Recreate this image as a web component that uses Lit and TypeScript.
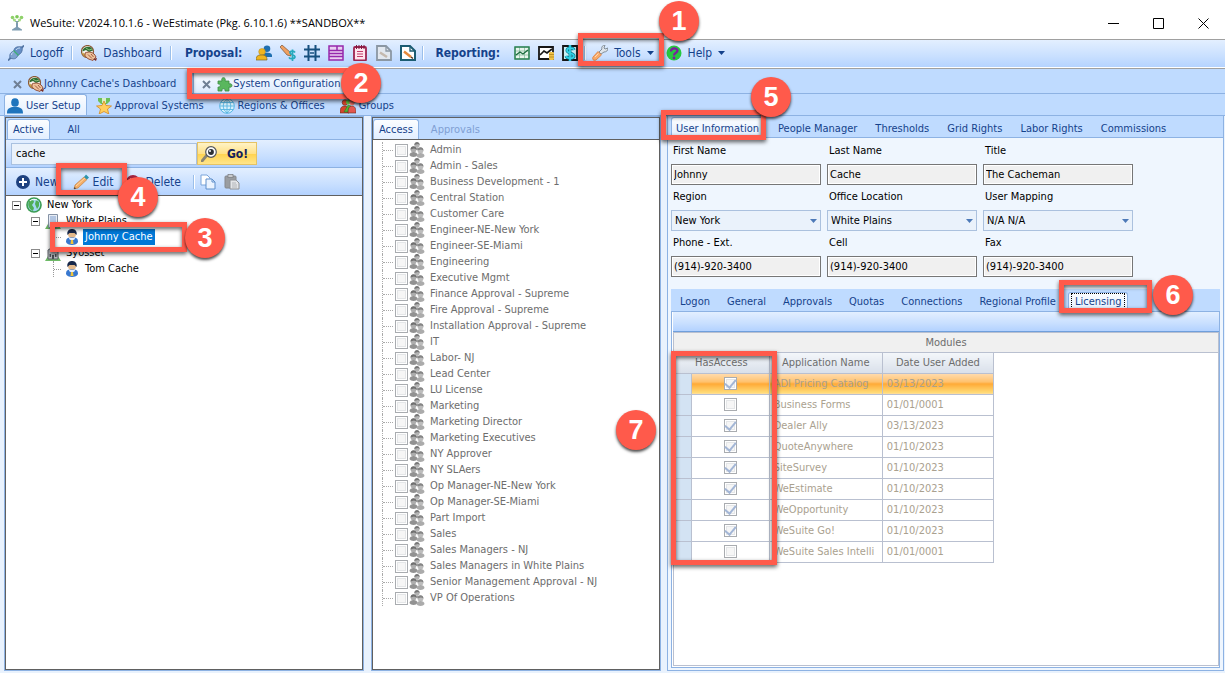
import { LitElement, html, css, svg, nothing, TemplateResult } from "lit";
import { customElement, property } from "lit/decorators.js";
import { classMap } from "lit/directives/class-map.js";
import { styleMap } from "lit/directives/style-map.js";

const glyphs: Record<string, TemplateResult> = {
  tree: svg`<path d="M7 6h2v6l4 2.500v1H3v-1L7 12z" fill="#7d9bb0"/><path d="M3.500 3.500L8 8l4.500-4.500" stroke="#8fae9a" fill="none"/><circle cx="3.500" cy="2.500" r="1.800" fill="#8fd16a"/><circle cx="8" cy="1.800" r="1.800" fill="#7cc957"/><circle cx="12.500" cy="2.500" r="1.800" fill="#8fd16a"/><circle cx="5.500" cy="5" r="1.500" fill="#a5db83"/><circle cx="10.500" cy="5" r="1.500" fill="#a5db83"/>`,
  plug: svg`<path d="M0 15.500l4-4M12 4.500l4-4" stroke="#5577a5" stroke-width="1.800"/><path d="M2 13c-1-4 1-6 4-7l4 4c-1 3-3 5-8 3z" fill="#7fa3d1" stroke="#48699a" stroke-width=".8"/><path d="M6 6c0-3 2-5 8-4 1 4-1 7-4 8z" fill="#6790c6" stroke="#48699a" stroke-width=".8"/><path d="M5.500 5.500l5 5" stroke="#3fae74" stroke-width="1.300"/><path d="M3.500 10c0-1.500 1-2.500 2-3M8 5c1-1.500 2.500-2 4-2" stroke="#c9dcf3" fill="none"/>`,
  dash: svg`<circle cx="6.500" cy="6.500" r="6" fill="#f6f3ec" stroke="#8b5a38" stroke-width="1.200"/><path d="M1.500 6.500c0-5 9-7 10.500-1L8 7 5 5z" fill="#2f6e35"/><path d="M5 3l3 2 3-1" stroke="#8cc27a" fill="none"/><path d="M1.500 8l3 3.500" stroke="#c8a040" stroke-width="1.500"/><path d="M4 8c4-2 9-1 11 4l-3 3.500c-2-1-6-1-8-5z" fill="#efc49d" stroke="#8a3f28" stroke-width=".9"/><path d="M7 9.500l4 4M10 9l2.500 3" stroke="#8a3f28" stroke-width=".8"/><path d="M12 14l3 2 1-3z" fill="#7a2d25"/>`,
  people: svg`<circle cx="11" cy="3.800" r="3.300" fill="#1f6fb0"/><path d="M6 12V9c1-2 9-2 10 1v2z" fill="#1f6fb0"/><circle cx="6" cy="6.800" r="3.300" fill="#f0b51d" stroke="#b58a22" stroke-width=".5"/><path d="M0 15c0-5 3-5 6-5s5 1 5 5z" fill="#f0b51d" stroke="#7c6420" stroke-width=".7"/>`,
  pendollar: svg`<path d="M0 2l2-2 8 7 1 4-4-1z" fill="#f0a060" stroke="#775339" stroke-width=".7"/><path d="M15 7.500c-1-2-5-2-5 .3s5 1.700 5 4-5 2.500-6 .5M12.500 4.500V16" stroke="#27a9bd" stroke-width="1.700" fill="none"/>`,
  grid: svg`<path d="M0 4.500h16M0 11.500h16M4.500 0v16M11.500 0v16" stroke="#17507f" stroke-width="2"/><path d="M6 8h4" stroke="#17507f" stroke-width="1.500"/>`,
  form: svg`<path d="M1 1h14v14H1zM1 5.500h14M1 8.500h14M1 11.500h14M9 1v4.500" fill="#ead1f2" stroke="#9629ac" stroke-width="1.500"/>`,
  note: svg`<rect x="2" y="2" width="12" height="13.500" rx="1" fill="#ffe4ee" stroke="#9d2350" stroke-width="1.800"/><path d="M4.500 0v4M7 0v4M9.500 0v4M12 0v4" stroke="#7c1a3f"/><path d="M5 6.500h6M5 9h6M5 11.500h6" stroke="#c23c6c" stroke-width="1.200"/>`,
  pageGray: svg`<path d="M1 1h9l5 5v9H1z" fill="#e2e8ef" stroke="#8b97a3" stroke-width="1.800"/><path d="M10 1v5h5" fill="none" stroke="#8b97a3" stroke-width="1.300"/><path d="M4 7.500l7 4.500" stroke="#c4b9ae" stroke-width="2.500"/>`,
  pageEdit: svg`<path d="M1 1h9l5 5v9H1z" fill="#fff" stroke="#1b5c72" stroke-width="2"/><path d="M10 1v5h5" fill="none" stroke="#1b5c72" stroke-width="1.300"/><path d="M4 6.500l7 5.500" stroke="#e58a3c" stroke-width="2.500"/><path d="M11 12l2 1.500" stroke="#4a3826" stroke-width="1.500"/>`,
  chartGreen: svg`<path d="M1 2h14v12H1zM1 6h14M1 10h14M5.500 2v12M10.500 2v12" fill="#e8f5ec" stroke="#7db596" stroke-width=".7"/><path d="M1 2h14v12H1z" fill="none" stroke="#2e8254" stroke-width="1.500"/><path d="M2 10l4-3 3 2 5-4" fill="none" stroke="#1a6b3d" stroke-width="1.400"/>`,
  chartBlack: svg`<path d="M1 2h14v12H1z" fill="#fff" stroke="#161616" stroke-width="1.800"/><path d="M2 10l4-4 3 2 5-4" fill="none" stroke="#161616" stroke-width="1.700"/><rect x="11" y="7" width="5" height="8" rx="1" fill="#f0c248"/><path d="M11 9.500h5M11 12h5" stroke="#a77b16" stroke-width=".7"/>`,
  dollar: svg`<path d="M1 1h14v14H1z" fill="#c9eff6" stroke="#151515" stroke-width="1.800"/><path d="M12 5c-1-3-7-2.500-7 .5S12 8 12 11s-7 3-8 0M8 0v16" fill="none" stroke="#0c7c92" stroke-width="3"/><path d="M12 5c-1-3-7-2.500-7 .5S12 8 12 11s-7 3-8 0M8 0v16" fill="none" stroke="#30d3e8" stroke-width="1.700"/>`,
  wrench: svg`<path d="M7 7l3-3c-1-2 1-4 3-4l-1 3 1 1 3-1c0 3-2 4-4 4L9 9z" fill="#dfe4ea" stroke="#6c7883" stroke-width=".8"/><path d="M1 12l5-5.500 3.500 3.500L4 15c-3 1-4-1-3-3z" fill="#f8ab6c" stroke="#dd7c38" stroke-width=".8"/><path d="M3 12l3.500-3.500" stroke="#ffd9b5"/>`,
  help: svg`<circle cx="8" cy="8" r="7.500" fill="#27c940"/><path d="M5 6.500c0-4 6.500-4 6.500-.8C11.500 8 8 7.500 8 10.500" fill="none" stroke="#7a1fa0" stroke-width="2.300"/><circle cx="8" cy="13" r="1.400" fill="#7a1fa0"/>`,
  puzzle: svg`<path d="M1 5h4c-1.800-4.500 4.800-4.500 3 0h4v3c4-1.500 4 4.500 0 3v4H8c1-3-4-3-3 0H1v-4c3 1 3-4 0-3z" fill="#5ab75e" stroke="#3b8d40" stroke-width=".8"/>`,
  user: svg`<ellipse cx="8" cy="4.500" rx="3.800" ry="4.300" fill="#1f74bd"/><path d="M0 15.500c0-5 2-5.500 5.500-6.500h5c3.500 1 5.500 1.500 5.500 6.500z" fill="#1f74bd"/>`,
  star: svg`<path d="M2 0h12v3l-3 3H5L2 3z" fill="#6cbf58"/><path d="M6 0h4v5H6z" fill="#d8f0c8"/><path d="M8 3l2 4.500 5.500.5-4 3 1.300 5L8 13.500 3.200 16l1.300-5-4-3L6 7.500z" fill="#ffcf5e" stroke="#d58a20" stroke-width=".8"/>`,
  globeLine: svg`<circle cx="8" cy="8" r="7.300" fill="#d9f1fc" stroke="#55b4e2"/><path d="M8 1v14M1 8h14M2 4.500h12M2 11.500h12M8 1c-5 4-5 10 0 14M8 1c5 4 5 10 0 14" fill="none" stroke="#55b4e2" stroke-width=".9"/>`,
  groups: svg`<circle cx="5" cy="4.500" r="2.800" fill="#e0452c" stroke="#5c2b1c" stroke-width=".6"/><path d="M0 15c0-6 2-7 5-7s4 2 4 7z" fill="#d6452c" stroke="#5c2b1c" stroke-width=".6"/><circle cx="8.500" cy="4" r="2.500" fill="#63c443"/><path d="M4 14l4-7 3 1-1 6z" fill="#4fb536" stroke="#276b20" stroke-width=".5"/><circle cx="12" cy="4.500" r="2.700" fill="#ef7468"/><path d="M8 15c0-6 2-7 4-7s4 1 4 7z" fill="#e4574e" stroke="#5c2b1c" stroke-width=".6"/>`,
  search: svg`<path d="M1 15l5-6" stroke="#8b8572" stroke-width="2.800" stroke-linecap="round"/><circle cx="10" cy="6" r="5.300" fill="#fff" stroke="#55585c" stroke-width="1.200"/><circle cx="10" cy="6" r="2.900" fill="#2b3035"/><circle cx="9" cy="5" r="1" fill="#fff"/>`,
  plus: svg`<circle cx="8" cy="8" r="7" fill="#1f4280"/><path d="M8 4v8M4 8h8" stroke="#fff" stroke-width="2"/>`,
  minus: svg`<circle cx="8" cy="8" r="7" fill="#a32440"/><path d="M5 5l6 6M11 5l-6 6" stroke="#fff" stroke-width="2"/>`,
  pencil: svg`<path d="M1 15l1-4L11 3l3 2.500L5 14z" fill="#f4ae68" stroke="#c08248" stroke-width=".7"/><path d="M3 12l9-8" stroke="#ffd7a3"/><path d="M11 3l2-2.500 3 3L14 5.500z" fill="#2d94ac"/><path d="M1 15l.6-2 1.400 1.400z" fill="#333"/>`,
  copy: svg`<path d="M1 1h6l3 3v7H1z" fill="#fff" stroke="#7ba5da"/><path d="M6 5h6l3 3v7H6z" fill="#eaf3ff" stroke="#5f8fcb"/><path d="M12 5v3h3" fill="none" stroke="#5f8fcb"/>`,
  paste: svg`<rect x="1" y="2" width="11" height="12" rx="1" fill="#9a9da1" stroke="#85888c"/><rect x="4" y="0.500" width="5" height="3" fill="#c9cbce" stroke="#77797c" stroke-width=".7"/><path d="M6 6h6l3 3v6H6z" fill="#e3e5e8" stroke="#8e9195"/><path d="M8 9h4M8 11h5M8 13h5" stroke="#a6a9ad" stroke-width=".8"/>`,
  globe: svg`<circle cx="8" cy="8" r="7.800" fill="#3b9c52"/><circle cx="8" cy="8" r="6.200" fill="#a5d8f2"/><path d="M3 4c3-2 5-1 5 1l-2 3 2 3-1 3C3 12 1 8 3 4zM10 3l3 2v4l-2 3-2-5z" fill="#4fae55"/><path d="M4 4c2-2 5-2 7-1" stroke="#fff" fill="none"/>`,
  building: svg`<path d="M0 16l3-5h10l3 5z" fill="#6dba66"/><path d="M3.500 1.500h9v13h-9z" fill="#e8edf5" stroke="#8592a5"/><path d="M5 4h6M5 6h6M5 8h6M5 10h6M5 12h6" stroke="#7f9fcf"/>`,
  office: svg`<path d="M0 16l3-5h10l3 5z" fill="#6dba66"/><path d="M3 5l5-3 5 3v9H3z" fill="#b6b9be" stroke="#5e6369"/><path d="M7 10h2v4H7zM4.500 9H6v3H4.500zM10 9h1.500v3H10z" fill="#4a4f55"/>`,
  agent: svg`<circle cx="8" cy="5" r="4" fill="#e3b98b"/><path d="M3.500 6c-2-8 11-8 9 0l-2-2h-5z" fill="#17284a"/><path d="M2 13c0-4 2-4.500 6-4.500s6 .5 6 4.500c-1 4-11 4-12 0z" fill="#3878cf"/><path d="M5 9c0 3 6 3 6 0z" fill="#e7f0ff"/><path d="M7 11h2l.5 4h-3z" fill="#f0c33c"/>`,
  team: svg`<circle cx="8" cy="3" r="2.600" fill="#b4b4b4"/><path d="M5.300 3c0-4 5.400-4 5.400 0L9 2z" fill="#777"/><path d="M4.500 8c0-3.500 7-3.500 7 0z" fill="#9c9c9c"/><circle cx="4.500" cy="7.500" r="2.900" fill="#adadad"/><path d="M1.500 7.500c0-4.500 6-4.500 6 0L5 6.500z" fill="#6f6f6f"/><path d="M.5 13c0-4 8-4 8 0-1 2.500-7 2.500-8 0z" fill="#929292"/><circle cx="11.500" cy="8.500" r="2.900" fill="#bdbdbd"/><path d="M8.500 8.500c0-4.500 6-4.500 6 0l-2.500-1z" fill="#858585"/><path d="M7.500 14c0-4 8-4 8 0-1 2.500-7 2.500-8 0z" fill="#ababab"/>`,
};

const icon = (name: string) =>
  html`<svg class="icon" viewBox="0 0 16 16" width="16" height="16" aria-hidden="true">${glyphs[name]}</svg>`;
const caret = html`<svg class="caret" viewBox="0 0 7 4" width="7" height="4" aria-hidden="true"><path d="M0 0h7L3.500 4z" fill="currentColor"/></svg>`;

const shared = css`
  * { box-sizing: border-box; }
  button, input, select { font: inherit; color: inherit; margin: 0; border-radius: 0; }
  button { background: none; border: 0; padding: 0; display: flex; align-items: center; white-space: nowrap; }
  .icon { display: block; flex: none; }
  .caret { display: block; flex: none; }
  .bar { display: flex; align-items: center; background: linear-gradient(#e3efff, #c8dfff 60%, #b3d2ff); color: #15428b; font-size: 12px; }
  .sep { width: 2px; height: 14px; background: #fff; border-left: 1px solid #9bbfea; flex: none; }
  .strip { display: flex; align-items: flex-end; background: #bfdbff; color: #15428b; }
  .tab { height: 20px; padding: 0 8px; border: 1px solid transparent; border-bottom: 0; }
  .tab.on { background: linear-gradient(#fbfdff, #e3efff); border-color: #8db2e3; border-radius: 3px 3px 0 0; }
  .check { appearance: none; width: 13px; height: 13px; border: 1px solid #a9acb0; background: #f6f6f6; box-shadow: inset 0 0 0 1px #fff, inset 0 0 0 2px #e4e6e8; display: grid; place-items: center; flex: none; }
  .check:checked::after { content: ""; width: 5px; height: 9px; border: solid #a3b6d6; border-width: 0 2px 2px 0; transform: translateY(-1px) rotate(40deg); }
`;

@customElement("user-tree")
class UserTree extends LitElement {
  static styles = [shared, css`
    :host { display: flex; flex-direction: column; border: 1px solid #606060; outline: 1px solid #8db2e3; background: #fff; min-width: 0; }
    .strip { height: 22px; border-bottom: 1px solid #8db2e3; }
    .tab { padding: 0 5px; margin-left: 1px; }
    .tab + .tab { margin-left: 12px; }
    .find { height: 28px; padding: 0 5px; border-bottom: 1px solid #8db2e3; }
    .term { width: 186px; height: 22px; border: 1px solid #a9c1e0; background: #eaf2fb; color: #000; padding: 0 4px; font-size: 11px; }
    .go { height: 23px; width: 60px; border: 1px solid #e5c365; background: linear-gradient(#fff3c6, #ffe188 50%, #ffd34e 52%, #ffe58c); color: #15225b; font-weight: bold; gap: 10px; padding: 0 3px; }
    .tools { height: 28px; padding: 0 9px; border-bottom: 1px solid #606060; }
    .tools button { gap: 4px; height: 22px; }
    .new { margin-right: 14px; }
    .edit, .del { margin-right: 12px; }
    .tools .copy { margin: 0 8px 0 5px; }
    ul { list-style: none; margin: 0; padding: 0; }
    .tree { padding: 1px 6px; flex: 1; }
    .node { display: flex; align-items: center; height: 16px; gap: 3px; }
    .name { padding: 0 2px; line-height: 16px; }
    .name.on { background: #0078d7; color: #fff; }
    .box { width: 9px; height: 9px; border: 1px solid #8a8a8a; display: grid; place-items: center; margin-right: 2px; background: #fff; }
    .box::after { content: ""; width: 5px; height: 1px; background: #000; }
    .kids { margin-left: 19px; }
    .kids .kids { margin-left: 22px; border-left: 1px dotted #999; }
    .leaf::before { content: ""; width: 7px; border-top: 1px dotted #999; }
  `];
  render() {
    return html`
      <div class="strip" role="tablist"><button class="tab on" role="tab">Active</button><button class="tab" role="tab">All</button></div>
      <div class="bar find"><input class="term" aria-label="Search users" .value=${"cache"}><button class="go">${icon("search")}Go!</button></div>
      <div class="bar tools">
        <button class="new">${icon("plus")}New</button><button class="edit">${icon("pencil")}Edit</button>
        <button class="del">${icon("minus")}Delete</button><span class="sep"></span>
        <button class="copy" aria-label="Copy">${icon("copy")}</button><button aria-label="Paste">${icon("paste")}</button>
      </div>
      <ul class="tree">
        <li><div class="node"><span class="box"></span>${icon("globe")}<span class="name">New York</span></div>
          <ul class="kids">
            <li><div class="node"><span class="box"></span>${icon("building")}<span class="name">White Plains</span></div>
              <ul class="kids"><li><div class="node leaf">${icon("agent")}<span class="name on">Johnny Cache</span></div></li></ul></li>
            <li><div class="node"><span class="box"></span>${icon("office")}<span class="name">Syosset</span></div>
              <ul class="kids"><li><div class="node leaf">${icon("agent")}<span class="name">Tom Cache</span></div></li></ul></li>
          </ul></li>
      </ul>`;
  }
}

const roles = ["Admin", "Admin - Sales", "Business Development - 1", "Central Station", "Customer Care", "Engineer-NE-New York", "Engineer-SE-Miami", "Engineering", "Executive Mgmt", "Finance Approval - Supreme", "Fire Approval - Supreme", "Installation Approval - Supreme", "IT", "Labor- NJ", "Lead Center", "LU License", "Marketing", "Marketing Director", "Marketing Executives", "NY Approver", "NY SLAers", "Op Manager-NE-New York", "Op Manager-SE-Miami", "Part Import", "Sales", "Sales Managers - NJ", "Sales Managers in White Plains", "Senior Management Approval - NJ", "VP Of Operations"];

@customElement("access-list")
class AccessList extends LitElement {
  static styles = [shared, css`
    :host { display: flex; flex-direction: column; border: 1px solid #606060; outline: 1px solid #8db2e3; background: #fff; min-width: 0; }
    .strip { height: 22px; border-bottom: 1px solid #606060; }
    .tab { padding: 0 5px; }
    .tab.off { margin-left: 6px; color: #7f9fd3; }
    .roles { list-style: none; margin: 0; padding: 2px 9px; color: #6d6d6d; }
    .role { display: flex; align-items: center; height: 16px; border-left: 1px dotted #aaa; }
    .role::before { content: ""; width: 10px; border-top: 1px dotted #aaa; margin-right: 2px; }
    .role label { display: flex; align-items: center; height: 16px; }
    .role .icon { margin: 0 5px 0 1px; }
  `];
  render() {
    return html`
      <div class="strip" role="tablist"><button class="tab on" role="tab">Access</button><button class="tab off" role="tab">Approvals</button></div>
      <ul class="roles">${roles.map(r => html`<li class="role"><label><input class="check" type="checkbox" disabled>${icon("team")}${r}</label></li>`)}</ul>`;
  }
}

const modules: [boolean, string, string][] = [
  [true, "ADI Pricing Catalog", "03/13/2023"], [false, "Business Forms", "01/01/0001"], [true, "Dealer Ally", "03/13/2023"],
  [true, "QuoteAnywhere", "01/10/2023"], [true, "SiteSurvey", "01/10/2023"], [true, "WeEstimate", "01/10/2023"],
  [true, "WeOpportunity", "01/10/2023"], [true, "WeSuite Go!", "01/10/2023"], [false, "WeSuite Sales Intelli", "01/01/0001"],
];
const fields: [string, string, boolean][] = [
  ["First Name", "Johnny", false], ["Last Name", "Cache", false], ["Title", "The Cacheman", false],
  ["Region", "New York", true], ["Office Location", "White Plains", true], ["User Mapping", "N/A N/A", true],
  ["Phone - Ext.", "(914)-920-3400", false], ["Cell", "(914)-920-3400", false], ["Fax", "(914)-920-3400", false],
];

@customElement("user-details")
class UserDetails extends LitElement {
  static styles = [shared, css`
    :host { display: flex; flex-direction: column; border: 1px solid #8db2e3; border-top: 0; background: #eff6fe; min-width: 0; padding: 0 3px 2px; }
    .strip { height: 22px; }
    .top { margin: 0 -3px; padding-left: 3px; border-bottom: 1px solid #8db2e3; }
    .top .tab { padding-top: 2px; }
    .top .tab.on { padding: 2px 4px 0; margin-right: 5px; }
    .fields { display: grid; grid-template-columns: repeat(3, 150px); column-gap: 6px; padding: 1px 0 12px; }
    .field { display: flex; flex-direction: column; color: #000; }
    .field label { height: 25px; line-height: 24px; padding-left: 2px; }
    .holder { position: relative; height: 21px; display: flex; }
    .holder input { flex: 1; min-width: 0; background: #f0f0f0; border: 1px solid #767676; box-shadow: inset 0 0 0 1px #fff; padding: 0 2px; }
    .holder select { flex: 1; min-width: 0; appearance: none; background: #eaf2fb; border: 1px solid #abc1de; padding: 0 3px; outline: 0; }
    .holder .caret { position: absolute; right: 4px; top: 9px; color: #4d7ab8; pointer-events: none; }
    .sub .tab { height: 19px; padding: 0 7px 0 8px; }
    .sub .tab.on { margin-left: 4px; padding: 0 3px; }
    .focus { outline: 1px dotted #000; padding: 0 3px; line-height: 16px; }
    .body { flex: 1; display: flex; flex-direction: column; border: 1px solid #8db2e3; background: #fff; padding: 0 0 1px 1px; }
    .blank { height: 20px; border-bottom: 1px solid #6f9fdc; }
    .frame { flex: 1; border: 1px solid #b9c0d0; }
    .title { height: 20px; line-height: 19px; text-align: center; background: #f0f0f0; border-bottom: 1px solid #b9c0d0; color: #6d6d6d; }
    table { border-collapse: collapse; table-layout: fixed; width: 320px; }
    th { height: 20px; padding: 0; font-weight: normal; color: #6d6d6d; background: linear-gradient(#f3f6fa, #d9e0ea); border: 1px solid #b9c0d0; border-top: 0; }
    td { height: 21px; padding: 0 4px; color: #aaa18f; border: 1px solid #b9c0d0; overflow: hidden; white-space: nowrap; }
    th:first-child, td:first-child { border-left: 0; }
    td.lead { background: #d3e3f3; padding: 0; }
    .lit td:not(.lead) { background: linear-gradient(#ffdcb0, #ffc069 45%, #ffa834 50%, #ffe07e); }
    td .check { margin: 0 auto; }
    .c1 { width: 17px; } .c2 { width: 78px; } .c3 { width: 113px; } .c4 { width: 111px; }
  `];
  render() {
    const top = ["User Information", "People Manager", "Thresholds", "Grid Rights", "Labor Rights", "Commissions"];
    const sub = ["Logon", "General", "Approvals", "Quotas", "Connections", "Regional Profile", "Licensing"];
    return html`
      <div class="strip top" role="tablist">${top.map((t, i) => html`<button role="tab" class=${classMap({ tab: true, on: i === 0 })}>${t}</button>`)}</div>
      <div class="fields">${fields.map(([name, value, pick], i) => html`<div class="field"><label for="f${i}">${name}</label><div class="holder">
        ${pick ? html`<select id="f${i}"><option>${value}</option></select>${caret}` : html`<input id="f${i}" .value=${value} readonly>`}</div></div>`)}</div>
      <div class="strip sub" role="tablist">${sub.map(t => t === "Licensing"
        ? html`<button role="tab" class="tab on"><span class="focus">${t}</span></button>`
        : html`<button role="tab" class="tab">${t}</button>`)}</div>
      <div class="body">
        <div class="bar blank"></div>
        <div class="frame">
          <div class="title">Modules</div>
          <table>
            <colgroup><col class="c1"><col class="c2"><col class="c3"><col class="c4"></colgroup>
            <thead><tr><th colspan="2">HasAccess</th><th>Application Name</th><th>Date User Added</th></tr></thead>
            <tbody>${modules.map(([has, name, date], i) => html`<tr class=${i === 0 ? "lit" : nothing}><td class="lead"></td><td><input type="checkbox" class="check" aria-label=${name} ?checked=${has} disabled></td><td>${name}</td><td>${date}</td></tr>`)}</tbody>
          </table>
        </div>
      </div>`;
  }
}

interface Mark { n: number; box?: [number, number, number, number]; at: [number, number]; }
const marks: Mark[] = [
  { n: 1, box: [578, 33, 86, 33], at: [679, 21] },
  { n: 2, box: [187, 68, 175, 31], at: [361, 83] },
  { n: 3, box: [50, 222, 137, 30], at: [205, 238] },
  { n: 4, box: [56, 163, 71, 32], at: [138, 197] },
  { n: 5, box: [661, 110, 105, 30], at: [771, 97] },
  { n: 6, box: [1059, 280, 93, 33], at: [1173, 295] },
  { n: 7, box: [671, 351, 106, 214], at: [636, 430] },
];

@customElement("step-marks")
class StepMarks extends LitElement {
  @property({ attribute: false }) marks: Mark[] = [];
  static styles = css`
    :host { position: absolute; inset: 0; pointer-events: none; overflow: hidden; }
    .box { position: absolute; box-sizing: border-box; border: 5px solid #ff5a4b; filter: drop-shadow(0 2px 2px rgba(0, 0, 0, .65)); }
    .dot { position: absolute; width: 40px; height: 40px; margin: -20px 0 0 -20px; border-radius: 50%; background: #ff5a4b; color: #fff; font: bold 27px/40px "Liberation Sans", sans-serif; text-align: center; box-shadow: 0 2px 3px rgba(0, 0, 0, .7); }
  `;
  render() {
    return this.marks.map(({ n, box, at }) => html`
      ${box ? html`<div class="box" style=${styleMap({ left: `${box[0]}px`, top: `${box[1]}px`, width: `${box[2]}px`, height: `${box[3]}px` })}></div>` : nothing}
      <div class="dot" style=${styleMap({ left: `${at[0]}px`, top: `${at[1]}px` })}>${n}</div>`);
  }
}

@customElement("app-root")
class AppRoot extends LitElement {
  static styles = [shared, css`
    :host { display: flex; flex-direction: column; position: relative; min-height: 100vh; background: #e9f2fd; font: 11px/14px "DejaVu Sans Condensed", "Noto Sans", sans-serif; overflow: hidden; }
    .title { display: flex; align-items: flex-end; height: 39px; padding: 0 16px 7px 9px; background: #fff; font: 11px/18px "Open Sans", sans-serif; color: #000; }
    .title .icon { margin: 0 5px 1px 0; }
    .window { margin-left: auto; display: flex; gap: 34px; height: 18px; align-items: center; }
    .menu { height: 30px; padding: 0 0 2px 8px; border: solid #a0a0a0; border-width: 1px 0; box-shadow: inset 0 -1px #fff; }
    .menu button { gap: 6px; }
    .menu .sep { margin: 0 8px; }
    .menu .set + .sep { margin: 0 6px; }
    .menu b { margin: 0 14px 0 5px; }
    .menu .tools { margin-right: 12px; }
    .set { display: flex; gap: 8px; }
    .docs { height: 25px; padding-left: 4px; border-bottom: 1px solid #8db2e3; }
    .doc { height: 21px; padding: 2px 8px 0; border: 1px solid transparent; border-bottom: 0; }
    .doc.on { background: linear-gradient(#fbfdff, #dcebff); border-color: #8db2e3; margin-left: 8px; }
    .doc .close { margin-right: 6px; color: #6f7f94; }
    .pages { height: 22px; padding-left: 4px; border-bottom: 1px solid #8db2e3; }
    .page { height: 21px; padding: 2px 5px 0 2px; gap: 3px; border: 1px solid transparent; border-bottom: 0; margin-right: 6px; }
    .page.on { background: linear-gradient(#fbfdff, #e3efff); border-color: #8db2e3; border-radius: 3px 3px 0 0; }
    .panes { flex: 1; display: grid; grid-template-columns: 358px 288px minmax(0, 1fr); column-gap: 9px; padding: 0 1px 2px 5px; }
    user-tree, access-list { margin: 1px 0; }
    user-details { margin-left: -2px; }
  `];
  render() {
    return html`
      <header class="title">${icon("tree")}<span>WeSuite: V2024.10.1.6 - WeEstimate (Pkg. 6.10.1.6) **SANDBOX**</span>
        <span class="window">
          <button aria-label="Minimize"><svg width="11" height="11"><path d="M0 5.500h11" stroke="#000"/></svg></button>
          <button aria-label="Maximize"><svg width="11" height="11"><path d="M.5.5h10v10H.5z" fill="none" stroke="#000"/></svg></button>
          <button aria-label="Close"><svg width="11" height="11"><path d="M.5.5l10 10M10.500.5l-10 10" stroke="#000"/></svg></button>
        </span></header>
      <nav class="bar menu">
        <button>${icon("plug")}Logoff</button><span class="sep"></span>
        <button>${icon("dash")}Dashboard</button><span class="sep"></span>
        <b>Proposal:</b><span class="set">${["people", "pendollar", "grid", "form", "note", "pageGray", "pageEdit"].map(n => html`<button aria-label=${n}>${icon(n)}</button>`)}</span>
        <span class="sep"></span><b>Reporting:</b><span class="set">${["chartGreen", "chartBlack", "dollar"].map(n => html`<button aria-label=${n}>${icon(n)}</button>`)}</span>
        <span class="sep"></span><button class="tools">${icon("wrench")}Tools${caret}</button><button>${icon("help")}Help${caret}</button>
      </nav>
      <div class="strip docs" role="tablist">${[["dash", "Johnny Cache's Dashboard"], ["puzzle", "System Configuration"]].map(([ic, name], i) => html`
        <button role="tab" class=${classMap({ doc: true, on: i === 1 })}><svg class="close" width="9" height="9" viewBox="0 0 9 9"><path d="M1 1l7 7M8 1L1 8" stroke="currentColor" stroke-width="2"/></svg>${icon(ic)}${name}</button>`)}</div>
      <div class="strip pages" role="tablist">${[["user", "User Setup"], ["star", "Approval Systems"], ["globeLine", "Regions & Offices"], ["groups", "Groups"]].map(([ic, name], i) => html`
        <button role="tab" class=${classMap({ page: true, on: i === 0 })}>${icon(ic)}${name}</button>`)}</div>
      <main class="panes"><user-tree></user-tree><access-list></access-list><user-details></user-details></main>
      <step-marks .marks=${marks}></step-marks>`;
  }
}
